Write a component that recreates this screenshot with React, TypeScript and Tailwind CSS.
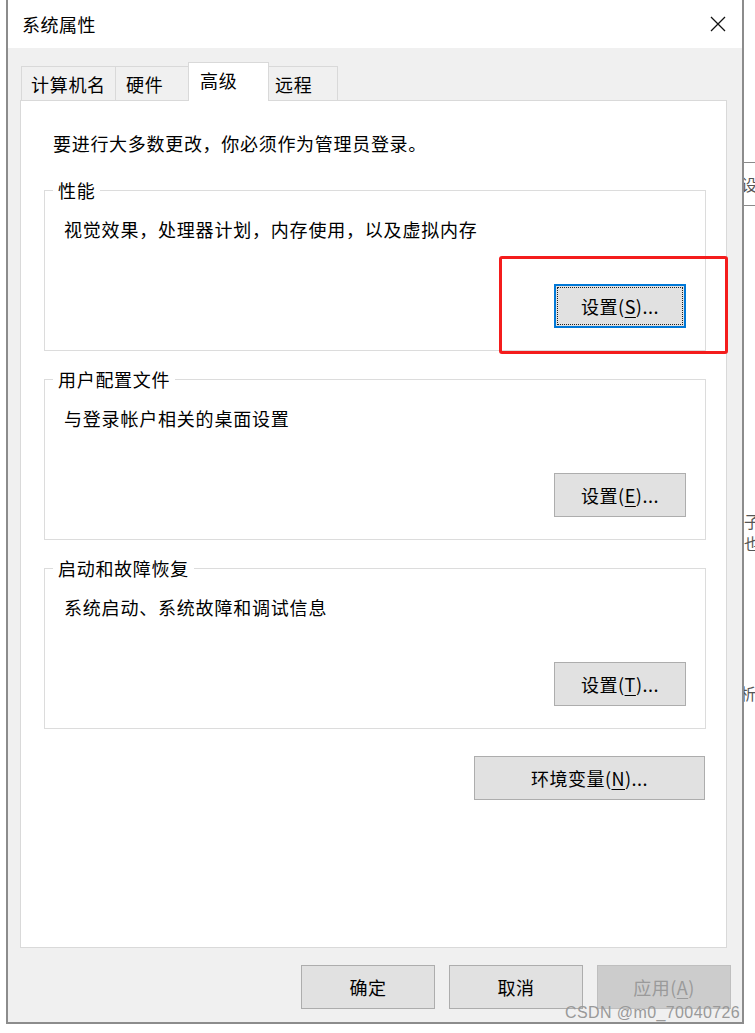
import React from "react";

const FONT = "font-['Microsoft_YaHei','Noto_Sans_CJK_SC',sans-serif]";

const WinButton = ({
  label,
  accel,
  suffix = "",
  className = "",
  focused = false,
  disabled = false,
}: {
  label: string;
  accel?: string;
  suffix?: string;
  className?: string;
  focused?: boolean;
  disabled?: boolean;
}) => (
  <button
    className={`${className} h-[44px] flex items-center justify-center text-[18px] leading-[24px] tracking-[0.5px] ${
      focused
        ? "border-2 border-[#0078d7] bg-[#e1e1e1] outline-1 outline-dotted outline-[#222] -outline-offset-[4px]"
        : disabled
          ? "border border-[#bfbfbf] bg-[#cccccc] text-[#9a9a9a]"
          : "border border-[#adadad] bg-[#e1e1e1] text-black"
    }`}
  >
    <span>
      {label}
      {accel && (
        <>
          (<span className="underline underline-offset-[3px]">{accel}</span>)
        </>
      )}
      {suffix}
    </span>
  </button>
);

const GroupBox = ({
  title,
  desc,
  accel,
  focused = false,
  highlight = false,
}: {
  title: string;
  desc: string;
  accel: string;
  focused?: boolean;
  highlight?: boolean;
}) => (
  <div className="relative h-[161px] border border-[#dcdcdc] flex flex-col justify-between pt-[26px] pb-[22px] pl-[19px] pr-[19px]">
    <span className="absolute -top-[13px] left-[8px] bg-white px-[5px] leading-[24px] text-[18px] tracking-[0.7px] text-black">
      {title}
    </span>
    <p className="leading-[24px] text-[18px] tracking-[0.8px] text-black">{desc}</p>
    <WinButton
      label="设置"
      accel={accel}
      suffix="..."
      focused={focused}
      className="self-end w-[132px]"
    />
    {highlight && (
      <div className="absolute left-[454px] top-[65px] w-[229px] h-[98px] border-[3px] border-[#f41c1c] rounded-[3px]" />
    )}
  </div>
);

const tabs = [
  { name: "计算机名", w: "w-[95px] pl-[9px]", active: false },
  { name: "硬件", w: "w-[74px] pl-[10px] -ml-px", active: false },
  { name: "高级", w: "w-[81px] pl-[11px] -ml-px", active: true },
  { name: "远程", w: "w-[70px] pl-[6px] -ml-px", active: false },
];

export default function App() {
  return (
    <div className={`relative w-[755px] h-[1033px] bg-white overflow-hidden text-black ${FONT}`}>
      <div className="flex">
        {/* dialog window */}
        <div className="ml-[6px] w-[738px] h-[1024px] border-2 border-t-0 border-[#8c8c8c] flex flex-col">
          <div className="h-[48px] bg-white flex items-center justify-between pl-[14px] pr-[16px]">
            <span className="text-[18px] leading-[24px] tracking-[0.5px]">系统属性</span>
            <svg width="16" height="16" viewBox="0 0 16 16">
              <path d="M1 1 L15 15 M15 1 L1 15" stroke="#111" strokeWidth="1.3" />
            </svg>
          </div>

          <div className="flex-1 bg-[#f0f0f0] pt-[14px] pl-[12px] pr-[15px] flex flex-col">
            {/* tabs */}
            <div className="h-[38px] flex items-end pl-px relative z-10">
              {tabs.map((t) =>
                t.active ? (
                  <div
                    key={t.name}
                    className={`${t.w} h-[39px] -mb-px bg-white border border-b-0 border-[#d9d9d9] pt-[5px] text-[18px] leading-[24px] tracking-[0.7px]`}
                  >
                    {t.name}
                  </div>
                ) : (
                  <div
                    key={t.name}
                    className={`${t.w} h-[34px] bg-[#f0f0f0] border border-b-0 border-[#d9d9d9] flex items-center text-[18px] leading-[24px] tracking-[0.7px]`}
                  >
                    {t.name}
                  </div>
                ),
              )}
            </div>

            {/* tab page */}
            <div className="h-[848px] bg-white border border-[#d9d9d9] pt-[30px] pl-[23px] pr-[20px] flex flex-col">
              <p className="pl-[9px] text-[18px] leading-[24px] tracking-[0.7px]">
                要进行大多数更改，你必须作为管理员登录。
              </p>
              <div className="mt-[35px] flex flex-col gap-[28px]">
                <GroupBox
                  title="性能"
                  desc="视觉效果，处理器计划，内存使用，以及虚拟内存"
                  accel="S"
                  focused
                  highlight
                />
                <GroupBox title="用户配置文件" desc="与登录帐户相关的桌面设置" accel="E" />
                <GroupBox title="启动和故障恢复" desc="系统启动、系统故障和调试信息" accel="T" />
              </div>
              <WinButton
                label="环境变量"
                accel="N"
                suffix="..."
                className="mt-[27px] self-end mr-px w-[231px]"
              />
            </div>

            {/* dialog buttons */}
            <div className="mt-[17px] flex justify-end gap-[14px] -mr-[4px]">
              <WinButton label="确定" className="w-[134px]" />
              <WinButton label="取消" className="w-[134px]" />
              <WinButton label="应用" accel="A" disabled className="w-[134px]" />
            </div>
          </div>
        </div>

        {/* background window fragments on the right */}
        <div className="w-[11px] overflow-hidden flex flex-col text-[#555] whitespace-nowrap">
          <div className="mt-[162px] h-[44px] border-y border-[#8a8a8a] flex items-center text-[16px] -ml-[3px]">
            设置
          </div>
          <div className="mt-[304px] text-[16px] leading-[22px]">子</div>
          <div className="text-[16px] leading-[22px]">也</div>
          <div className="mt-[128px] text-[16px] leading-[22px] -ml-[4px]">析、</div>
        </div>
      </div>

      {/* watermark */}
      <span className="absolute left-[565px] top-[1005px] font-['Liberation_Sans',sans-serif] text-[16px] leading-[16px] tracking-[0.4px] text-[#999999]">
        CSDN @m0_70040726
      </span>
    </div>
  );
}
